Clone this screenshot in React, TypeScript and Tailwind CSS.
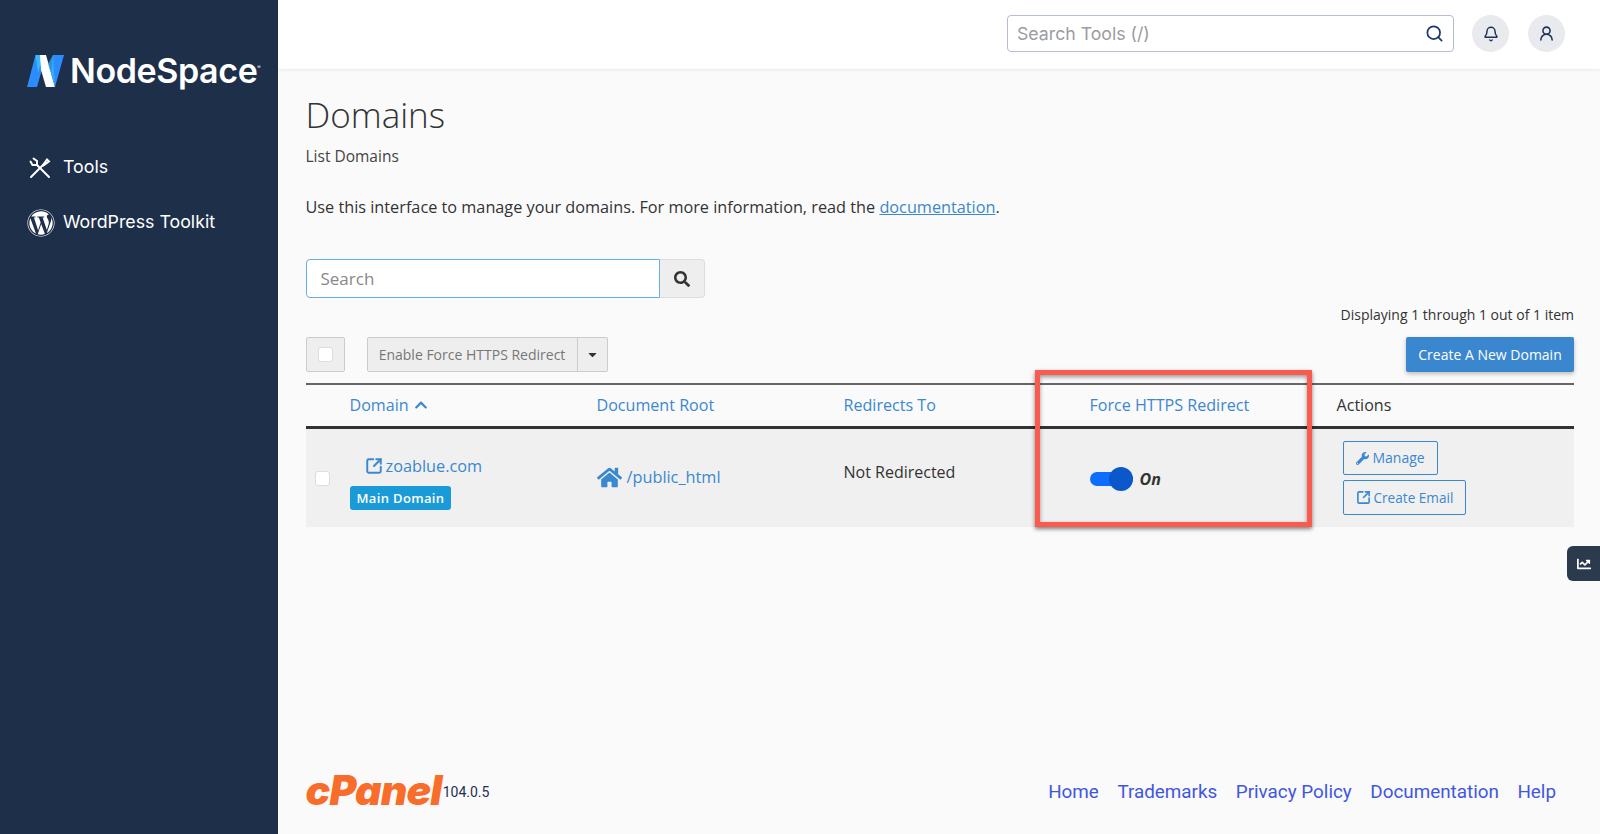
import { Bell, Search, SquareArrowOutUpRight, UserRound } from "lucide-react";
import { FaCaretDown, FaChartLine, FaChevronUp, FaHome, FaSearch, FaWordpress, FaWrench } from "react-icons/fa";

function NodeSpaceMark() {
  return (
    <svg width="37" height="32" viewBox="0 0 37 32">
      <polygon points="8.5,0 19,0 10,32 0,32" fill="#2a8cff" />
      <polygon points="8.5,0 16,0 11,18" fill="#38b9ff" />
      <polygon points="13,0 19,0 28,32 19,32 14,15" fill="#ffffff" />
      <polygon points="26,0 37,0 28,32 24,18" fill="#2a8cff" />
      <polygon points="21,9 26,0 28,32" fill="#38b9ff" opacity="0.7" />
    </svg>
  );
}

function ToolsIcon() {
  return (
    <svg width="22" height="22" viewBox="0 0 22 22" fill="none" stroke="white" strokeWidth="2" strokeLinecap="round">
      <path d="M2 20 L14 8" />
      <path d="M14 8 L18 2.5 L20 4.5 L14.5 8.5" />
      <path d="M8 8 L20 20" />
      <path d="M8 8 L3.5 8 L1.5 4.5 M8 8 L8 4 L4.5 1.5" />
    </svg>
  );
}

function Sidebar() {
  return (
    <aside className="w-[278px] shrink-0 bg-[#1e2f4a] text-white font-['Inter',sans-serif]">
      <div className="flex items-center gap-[6px] pl-[27px] pt-[53px]">
        <NodeSpaceMark />
        <span className="text-[34px] font-semibold leading-[36px] tracking-[-0.4px]">NodeSpace</span>
        <span className="ml-[-6px] mt-[-8px] text-[5px] leading-none">®</span>
      </div>
      <nav className="mt-[51px] flex flex-col">
        <div className="flex h-[55px] items-center pl-[29px]">
          <ToolsIcon />
          <span className="ml-[12px] text-[17.8px]">Tools</span>
        </div>
        <div className="flex h-[55px] items-center pl-[27px]">
          <FaWordpress size={28} />
          <span className="ml-[8px] text-[17.8px]">WordPress Toolkit</span>
        </div>
      </nav>
    </aside>
  );
}

function Header() {
  return (
    <header className="flex h-[69px] shrink-0 items-center justify-end gap-[19px] bg-white pb-[2px] pr-[35px] shadow-[0_1px_3px_rgba(0,0,0,0.08)] font-['Inter',sans-serif]">
      <div className="mr-[-1px] flex h-[37px] w-[447px] items-center justify-between rounded-[4px] border border-[#b4bdd6] pl-[9px] pr-[9px]">
        <span className="pt-[1px] text-[17.7px] text-[#9a9ca3]">Search Tools (/)</span>
        <Search size={19} strokeWidth={2.2} color="#1c3a72" />
      </div>
      <div className="flex h-[37px] w-[37px] items-center justify-center rounded-full bg-[#e9eaed]">
        <Bell size={16} strokeWidth={2.2} color="#1c3058" />
      </div>
      <div className="flex h-[37px] w-[37px] items-center justify-center rounded-full bg-[#e9eaed]">
        <UserRound size={17} strokeWidth={2.2} color="#1c3058" />
      </div>
    </header>
  );
}

function DomainsTable() {
  return (
    <div className="relative mt-[11px] text-base">
      <div className="box-content flex h-[41px] items-center border-t-2 border-b-[3px] border-t-[#666] border-b-[#333] text-[16.1px]">
        <div className="w-[44px]" />
        <div className="flex w-[247px] items-center gap-[5px] text-[#3b88cf]">
          Domain <FaChevronUp size={14} />
        </div>
        <div className="w-[247px] text-[#3b88cf]">Document Root</div>
        <div className="w-[246px] text-[#3b88cf]">Redirects To</div>
        <div className="w-[247px] text-[#3b88cf]">Force HTTPS Redirect</div>
        <div className="text-[#333]">Actions</div>
      </div>
      <div className="flex h-[98px] bg-[#f0f0f0]">
        <div className="flex w-[44px] items-center pl-[9px]">
          <div className="h-[15px] w-[15px] rounded-[3px] border border-[#ddd] bg-white" />
        </div>
        <div className="w-[247px] pt-[25px]">
          <div className="flex items-center gap-[3px] pl-[15px] text-[16.3px] leading-[24px] text-[#3b88cf]">
            <SquareArrowOutUpRight size={18} strokeWidth={2.6} />
            zoablue.com
          </div>
          <div className="mt-[8px] w-fit rounded-[3px] bg-[#1a9bd7] px-[7px] py-[3px] text-[13px] font-semibold leading-[18px] tracking-[0.35px] text-white">
            Main Domain
          </div>
        </div>
        <div className="flex w-[247px] items-center gap-[5px] pb-[2px] text-[16.3px] text-[#3b88cf]">
          <FaHome size={25} />
          /public_html
        </div>
        <div className="w-[246px] pt-[31px] text-[#333]">Not Redirected</div>
        <div className="flex w-[247px] items-center gap-[7px] pt-[1px]">
          <div className="relative h-[14px] w-[43px] rounded-full bg-[#0d6efd]">
            <div className="absolute right-0 top-[-5px] h-[24px] w-[24px] rounded-full bg-[#0a58c9]" />
          </div>
          <span className="text-base font-bold italic text-[#333]">On</span>
        </div>
        <div className="flex flex-col items-start gap-[5px] pl-[6px] pt-[12px] text-sm text-[#3b88cf]">
          <div className="flex h-[34px] items-center gap-[4px] rounded-[2px] border border-[#3b88cf] px-[12px]">
            <FaWrench size={13} /> Manage
          </div>
          <div className="flex h-[35px] items-center gap-[3px] rounded-[2px] border border-[#3b88cf] px-[12px]">
            <SquareArrowOutUpRight size={15} strokeWidth={2.6} /> <span className="text-[13.6px]">Create Email</span>
          </div>
        </div>
      </div>
      <div className="absolute left-[729.5px] top-[-13px] h-[157px] w-[277px] border-[5px] border-[#fb5a4e] shadow-[0_2px_4px_rgba(0,0,0,0.5),inset_0_2px_4px_rgba(0,0,0,0.4)]" />
    </div>
  );
}

function Footer() {
  return (
    <footer className="mt-auto flex items-center justify-between pb-[26px] pr-[18px]">
      <div className="flex items-end">
        <span className="mb-[5px] font-['Inter',sans-serif] text-[41px] font-black italic leading-[26px] tracking-[-0.8px] text-[#f96d2b]">
          cPanel
        </span>
        <span className="mb-[6px] ml-[1px] font-['Roboto',sans-serif] text-sm text-[#1c3058]">104.0.5</span>
      </div>
      <div className="flex gap-[18.5px] font-['Roboto',sans-serif] text-[18.85px] text-[#3f57e0]">
        <span>Home</span>
        <span>Trademarks</span>
        <span>Privacy Policy</span>
        <span>Documentation</span>
        <span>Help</span>
      </div>
    </footer>
  );
}

export default function App() {
  return (
    <div className="relative flex h-[834px] overflow-hidden bg-[#fafafa] font-['Open_Sans',sans-serif]">
      <Sidebar />
      <div className="flex min-w-0 flex-1 flex-col">
        <Header />
        <main className="flex flex-1 flex-col pl-[27.5px] pr-[26px]">
          <h1 className="mt-[22px] text-[35px] font-light leading-[48px] text-[#333]">Domains</h1>
          <p className="mt-[5px] text-[15.5px] leading-[24px] text-[#444]">List Domains</p>
          <p className="mt-[27px] text-[16.25px] leading-[24px] text-[#333]">
            Use this interface to manage your domains. For more information, read the{" "}
            <span className="text-[#3b88cf] underline">documentation</span>.
          </p>

          <div className="mt-[40px] flex h-[39px]">
            <div className="flex w-[354px] items-center rounded-l-[4px] border border-[#66afe9] bg-white px-[14px] text-[17px] text-[#888]">
              Search
            </div>
            <div className="flex w-[45px] items-center justify-center rounded-r-[4px] border border-l-0 border-[#ddd] bg-[#eee]">
              <FaSearch size={16} color="#333" />
            </div>
          </div>

          <div className="mt-[7px] text-right text-sm text-[#333]">Displaying 1 through 1 out of 1 item</div>

          <div className="mt-[12px] flex h-[35px] items-center">
            <div className="flex h-[35px] w-[39px] items-center justify-center rounded-[2px] border border-[#ccc] bg-[#eee]">
              <div className="h-[15px] w-[15px] rounded-[3px] border border-[#ddd] bg-white" />
            </div>
            <div className="ml-[22px] flex h-[35px] rounded-[2px] border border-[#ccc] bg-[#eee] text-sm text-[#777]">
              <div className="flex w-[210px] items-center justify-center border-r border-[#ccc]">Enable Force HTTPS Redirect</div>
              <div className="flex w-[29px] items-center justify-center">
                <FaCaretDown size={13} color="#333" />
              </div>
            </div>
            <div className="ml-auto flex h-[35px] w-[168px] items-center justify-center rounded-[2px] bg-[#3a87cf] text-sm text-white shadow-[0_2px_4px_rgba(0,0,0,0.25)]">
              Create A New Domain
            </div>
          </div>

          <DomainsTable />
          <Footer />
        </main>
      </div>
      <div className="absolute right-0 top-[546px] flex h-[35px] w-[33px] items-center justify-center rounded-l-[6px] bg-[#2b3a4d]">
        <FaChartLine size={14} color="white" />
      </div>
    </div>
  );
}
